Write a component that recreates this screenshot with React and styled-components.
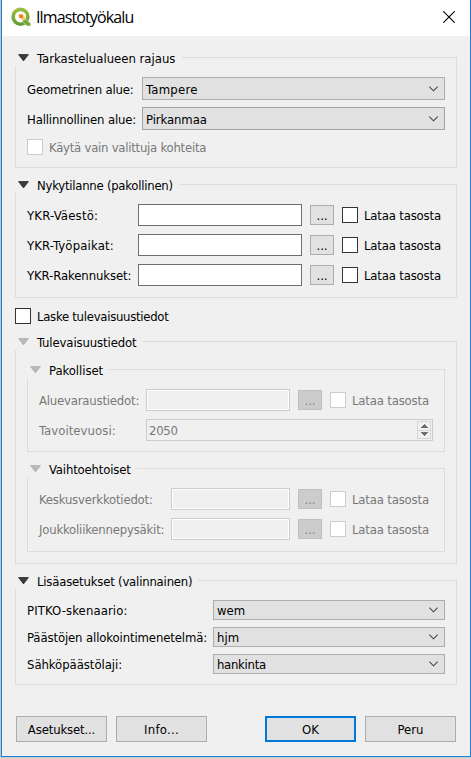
import React from 'react';
import styled, { createGlobalStyle, css } from 'styled-components';

const GlobalStyle = createGlobalStyle`
  *, *::before, *::after { box-sizing: border-box; }
  html, body { margin: 0; background: #d2d4d6; }
  body { overflow: hidden; }
  button, input { font: inherit; margin: 0; border-radius: 0; outline: none; }
`;

const Desktop = styled.div`
  width: 471px;
  height: 759px;
  padding: 0 0 2px 1px;
  background: linear-gradient(to top, #dcdcdc, #c2c4c6 2px);
`;

const Dialog = styled.main`
  display: flex;
  flex-direction: column;
  height: 757px;
  border: 1px solid #1c7fd6;
  border-top: 0;
  background: #f0f0f0;
  color: #000;
  font: 13px/18px "DejaVu Sans Condensed", "DejaVu Sans", sans-serif;
`;

const TitleBar = styled.header`
  display: flex;
  align-items: center;
  height: 36px;
  padding: 0 15px 2px 9px;
  background: #fff;
`;

const WindowTitle = styled.h1`
  flex: 1;
  margin: 0 0 0 5px;
  font: 400 16px/22px "Open Sans", sans-serif;
  letter-spacing: -0.88px;
`;

const CloseButton = styled.button`
  display: flex;
  padding: 0;
  border: 0;
  background: none;
`;

const Content = styled.div`
  display: flex;
  flex-direction: column;
  padding: 12px 13px 0;
`;

const Text = styled.span`
  white-space: nowrap;
  letter-spacing: ${(p) => p.$track || 0}px;
  ${(p) => p.$shift && css`padding-top: ${p.$shift}px;`}
`;

const GroupBox = styled.section`
  display: flex;
  flex-direction: column;
  margin-top: ${(p) => p.$top || 0}px;
`;

const GroupHeader = styled.div`
  display: flex;
  height: 18px;
`;

const GroupTitle = styled.div`
  display: flex;
  align-items: center;
  gap: 8px;
  width: ${(p) => p.$width}px;
  padding: 2px 0 0 3px;
`;

const Rule = styled.div`
  flex: 1;
  margin-top: 9px;
  border: solid #dcdcdc;
  border-width: 1px 1px 0 0;
`;

const GroupBody = styled.div`
  display: flex;
  flex-direction: column;
  gap: ${(p) => p.$gap || 0}px;
  padding: ${(p) => p.$pad};
  border: 1px solid #dcdcdc;
  border-top: 0;
`;

const FormRow = styled.div`
  display: grid;
  grid-template-columns: ${(p) => p.$label}px 1fr;
  align-items: center;
  color: ${(p) => (p.$disabled ? '#787878' : '#000')};
`;

const FileControls = styled.div`
  display: grid;
  grid-template-columns: 1fr 24px 103px;
  column-gap: 8px;
  align-items: center;
`;

const LineEdit = styled.input`
  width: 100%;
  min-width: 0;
  height: 22px;
  padding: 0 2px;
  border: 1px solid #6e6e6e;
  background: #fff;
  &:disabled {
    border-color: #ccc;
    background: #f0f0f0;
    box-shadow: inset 0 0 0 1px #fff;
  }
`;

const BrowseButton = styled.button`
  height: 20px;
  padding: 0;
  border: 1px solid #adadad;
  background: #e1e1e1;
  color: #000;
  line-height: 17px;
  &:disabled {
    border-color: #bfbfbf;
    background: #ccc;
    color: #838383;
  }
`;

const CheckRow = styled.label`
  display: flex;
  align-items: center;
  gap: 6px;
  height: 16px;
  margin-top: ${(p) => p.$top || 0}px;
  color: ${(p) => (p.$disabled ? '#787878' : '#000')};
`;

const CheckSquare = styled.input.attrs({ type: 'checkbox' })`
  appearance: none;
  flex: none;
  width: 16px;
  height: 16px;
  border: 1px solid #333;
  background: #fff;
  &:disabled { border-color: #ccc; }
`;

const ComboBox = styled.div`
  display: flex;
  align-items: center;
  justify-content: space-between;
  height: ${(p) => p.$height}px;
  padding: 0 6px 0 3px;
  border: 1px solid ${(p) => p.$edge || '#adadad'};
  background: #e1e1e1;
`;

const SpinBox = styled.div`
  display: flex;
  align-items: center;
  justify-content: space-between;
  height: 22px;
  padding: 0 1px 0 2px;
  border: 1px solid #ccc;
`;

const SpinButtons = styled.div`
  display: flex;
  flex-direction: column;
  width: 14px;
  height: 18px;
  border: 1px solid #d5d5d5;
`;

const SpinStep = styled.div`
  display: flex;
  flex: 1;
  align-items: center;
  justify-content: center;
  & + & { border-top: 1px solid #d5d5d5; }
`;

const Footer = styled.footer`
  display: flex;
  gap: 9px;
  margin-top: 31px;
  padding: 0 14px;
`;

const PushButton = styled.button`
  width: 91px;
  height: 26px;
  padding: 1px 0 0;
  border: ${(p) => (p.$default ? '2px solid #0078d7' : '1px solid #adadad')};
  background: #e1e1e1;
  color: #000;
  line-height: 16px;
`;

const Spacer = styled.div`flex: 1;`;

const Logo = () => (
  <svg width="20" height="20" viewBox="0 0 20 20">
    <defs>
      <linearGradient id="ring" x1="0" y1="0" x2="0" y2="1">
        <stop offset="0" stopColor="#9bbd3e" />
        <stop offset="1" stopColor="#629f35" />
      </linearGradient>
    </defs>
    <circle cx="9.5" cy="9.8" r="7.4" fill="none" stroke="url(#ring)" strokeWidth="3.6" />
    <path d="M11.5 12.2h3.8l4.4 4.2v2.7h-3.6l-4.6-4.4z" fill="#77a73a" stroke="#fff" strokeWidth=".5" />
    <path d="M8 7.5h3.6l3.4 3.8-2 2.4L8 10.4z" fill="#f2cf6b" />
    <path d="M8 7.4h3.8v3.8L8 10.6z" fill="#ee7913" />
  </svg>
);

const CloseIcon = () => (
  <svg width="12" height="12" viewBox="0 0 12 12">
    <path d="M.3.3l11.4 11.4M11.7.3L.3 11.7" stroke="#000" strokeWidth="1.1" />
  </svg>
);

const Chevron = () => (
  <svg width="9" height="6" viewBox="0 0 9 6">
    <path d="M.3.6l4.2 4.2L8.7.6" fill="none" stroke="#444" strokeWidth="1.1" />
  </svg>
);

const Expander = ({ faded }) => (
  <svg width="11" height="8" viewBox="0 0 11 8">
    <path d="M.6.6h9.8L5.5 6.9z" fill={faded ? '#b9b9b9' : '#3c3c3c'} stroke={faded ? '#acacac' : '#222'} strokeWidth=".8" />
  </svg>
);

const Step = ({ down }) => (
  <svg width="7" height="4" viewBox="0 0 7 4" shapeRendering="crispEdges">
    <path d={down ? 'M0 0h7L3.5 4z' : 'M0 4h7L3.5 0z'} fill="#6d6d6d" />
  </svg>
);

const Group = ({ title, track, width, top, pad, gap, faded, children }) => (
  <GroupBox $top={top}>
    <GroupHeader>
      <GroupTitle $width={width}>
        <Expander faded={faded} />
        <Text $track={track} $shift={2}>{title}</Text>
      </GroupTitle>
      <Rule />
    </GroupHeader>
    <GroupBody $pad={pad} $gap={gap}>{children}</GroupBody>
  </GroupBox>
);

const Check = ({ text, track, top, disabled }) => (
  <CheckRow $top={top} $disabled={disabled}>
    <CheckSquare disabled={disabled} />
    <Text $track={track} $shift={2}>{text}</Text>
  </CheckRow>
);

const FileRow = ({ label, track, labelWidth, disabled }) => (
  <FormRow $label={labelWidth} $disabled={disabled}>
    <Text $track={track} $shift={2}>{label}</Text>
    <FileControls>
      <LineEdit disabled={disabled} />
      <BrowseButton disabled={disabled}>...</BrowseButton>
      <Check text="Lataa tasosta" track={-0.17} disabled={disabled} />
    </FileControls>
  </FormRow>
);

const ComboRow = ({ label, track, labelWidth, value, valueTrack, height, edge, shift = 1 }) => (
  <FormRow $label={labelWidth}>
    <Text $track={track} $shift={shift}>{label}</Text>
    <ComboBox $height={height} $edge={edge}>
      <Text $track={valueTrack} $shift={shift}>{value}</Text>
      <Chevron />
    </ComboBox>
  </FormRow>
);

export default function App() {
  return (
    <>
      <GlobalStyle />
      <Desktop>
        <Dialog>
          <TitleBar>
            <Logo />
            <WindowTitle>Ilmastotyökalu</WindowTitle>
            <CloseButton aria-label="Sulje"><CloseIcon /></CloseButton>
          </TitleBar>
          <Content>
            <Group title="Tarkastelualueen rajaus" width={167} pad="11px 11px 12px" gap={7}>
              <ComboRow label="Geometrinen alue:" track={-0.16} labelWidth={115} value="Tampere" valueTrack={0.25} height={23} shift={3} />
              <ComboRow label="Hallinnollinen alue:" track={-0.15} labelWidth={115} value="Pirkanmaa" valueTrack={-0.1} height={23} edge="#9aa5ad" shift={3} />
              <Check text="Käytä vain valittuja kohteita" track={-0.25} top={2} disabled />
            </Group>
            <Group title="Nykytilanne (pakollinen)" track={-0.25} width={164} top={7} pad="11px" gap={8}>
              <FileRow label="YKR-Väestö:" track={0.2} labelWidth={111} />
              <FileRow label="YKR-Työpaikat:" track={0.15} labelWidth={111} />
              <FileRow label="YKR-Rakennukset:" track={-0.1} labelWidth={111} />
            </Group>
            <Check text="Laske tulevaisuustiedot" track={-0.28} top={10} />
            <Group title="Tulevaisuustiedot" track={-0.12} width={128} top={8} pad="10px 11px 11px" faded>
              <Group title="Pakolliset" track={-0.06} width={82} pad="11px 11px 10px" gap={8} faded>
                <FileRow label="Aluevaraustiedot:" track={-0.2} labelWidth={107} disabled />
                <FormRow $label={107} $disabled>
                  <Text $track={0.05} $shift={2}>Tavoitevuosi:</Text>
                  <SpinBox>
                    <Text $track={-0.3} $shift={2}>2050</Text>
                    <SpinButtons>
                      <SpinStep><Step /></SpinStep>
                      <SpinStep><Step down /></SpinStep>
                    </SpinButtons>
                  </SpinBox>
                </FormRow>
              </Group>
              <Group title="Vaihtoehtoiset" track={-0.17} width={110} top={7} pad="11px" gap={8} faded>
                <FileRow label="Keskusverkkotiedot:" track={-0.2} labelWidth={132} disabled />
                <FileRow label="Joukkoliikennepysäkit:" track={-0.2} labelWidth={132} disabled />
              </Group>
            </Group>
            <Group title="Lisäasetukset (valinnainen)" track={-0.2} width={183} top={7} pad="11px 11px 10px" gap={7}>
              <ComboRow label="PITKO-skenaario:" track={0.1} labelWidth={186} value="wem" height={20} />
              <ComboRow label="Päästöjen allokointimenetelmä:" track={-0.12} labelWidth={186} value="hjm" height={20} />
              <ComboRow label="Sähköpäästölaji:" track={-0.05} labelWidth={186} value="hankinta" valueTrack={-0.3} height={20} />
            </Group>
          </Content>
          <Footer>
            <PushButton><Text $track={-0.15}>Asetukset...</Text></PushButton>
            <PushButton><Text $track={0.25}>Info...</Text></PushButton>
            <Spacer />
            <PushButton $default>OK</PushButton>
            <PushButton>Peru</PushButton>
          </Footer>
        </Dialog>
      </Desktop>
    </>
  );
}
